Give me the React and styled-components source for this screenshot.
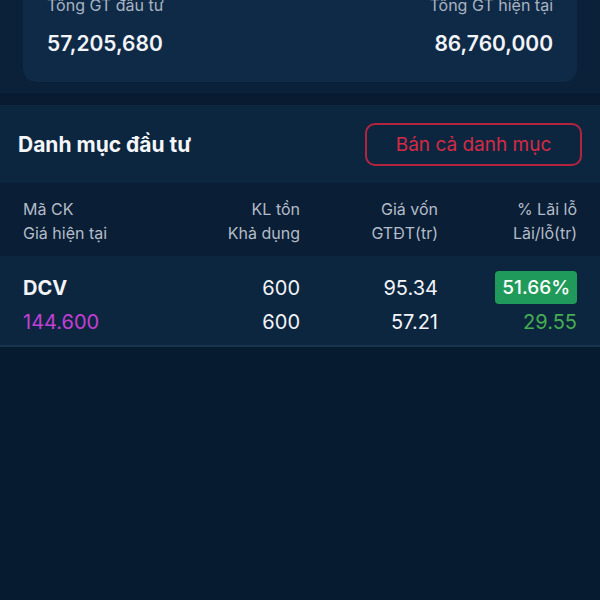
import React from "react";
import styled, { createGlobalStyle } from "styled-components";

const Global = createGlobalStyle`
  html, body { margin: 0; padding: 0; background: #061a30; }
  body { font-family: Inter, "Noto Sans", sans-serif; overflow: hidden; }
  #root { min-height: 600px; background: #061a30; }
`;

const Page = styled.div`
  width: 600px;
  height: 600px;
  overflow: hidden;
  background: #061a30;
  display: flex;
  flex-direction: column;
`;

const SummaryWrap = styled.div`
  background: #0b2139;
  padding: 0 23px 11px;
`;

const SummaryCard = styled.div`
  margin-top: -14px;
  background: #0f2a47;
  border-radius: 0 0 14px 14px;
  padding: 9px 24px 26px;
  display: flex;
  justify-content: space-between;
`;

const Stat = styled.div`
  display: flex;
  flex-direction: column;
  align-items: ${(p) => (p.$right ? "flex-end" : "flex-start")};
  gap: 17px;
`;

const StatLabel = styled.div`
  font-size: 16px;
  line-height: 20px;
  color: #a9b3c0;
`;

const StatValue = styled.div`
  font-size: 21px;
  line-height: 24px;
  font-weight: 600;
  color: #f2f4f7;
`;

const Divider = styled.div`
  height: 12px;
  background: #081b30;
`;

const SectionHeader = styled.div`
  height: 78px;
  background: #0d2640;
  display: flex;
  align-items: center;
  justify-content: space-between;
  padding: 0 18px;
`;

const Title = styled.h2`
  margin: 0;
  font-size: 21px;
  font-weight: 700;
  color: #f4f6f8;
`;

const SellButton = styled.button`
  width: 217px;
  height: 43px;
  margin-top: 1px;
  border: 2px solid #b3253f;
  border-radius: 10px;
  background: transparent;
  color: #d62a45;
  font-family: inherit;
  font-size: 19px;
  display: flex;
  align-items: center;
  justify-content: center;
`;

const Grid = styled.div`
  display: grid;
  grid-template-columns: 157px 120px 138px 139px;
  padding: 0 23px;
  background: ${(p) => p.$bg};
  border-bottom: ${(p) => (p.$border ? "2px solid #1b3450" : "none")};
`;

const HeadRow = styled(Grid)`
  padding-top: 14px;
  padding-bottom: 11px;
`;

const DataRow = styled(Grid)`
  padding-top: 15px;
  padding-bottom: 11px;
`;

const Cell = styled.div`
  display: flex;
  flex-direction: column;
  align-items: ${(p) => (p.$left ? "flex-start" : "flex-end")};
`;

const HeadText = styled.div`
  font-size: 16px;
  line-height: 24px;
  color: #b3bcc8;
  white-space: nowrap;
`;

const Line1 = styled.div`
  height: 33px;
  display: flex;
  align-items: center;
  font-size: 20px;
  font-weight: ${(p) => (p.$bold ? 700 : 400)};
  color: #f2f4f7;
`;

const Line2 = styled.div`
  margin-top: 6px;
  height: 24px;
  line-height: 24px;
  font-size: 20px;
  color: ${(p) => p.$color || "#f2f4f7"};
`;

const Badge = styled.span`
  background: #1f9a5b;
  color: #ffffff;
  border-radius: 4px;
  padding: 0 7px;
  height: 33px;
  display: flex;
  align-items: center;
  font-size: 19px;
  font-weight: 500;
`;

export default function App() {
  return (
    <Page>
      <Global />
      <SummaryWrap>
        <SummaryCard>
          <Stat>
            <StatLabel>Tổng GT đầu tư</StatLabel>
            <StatValue>57,205,680</StatValue>
          </Stat>
          <Stat $right>
            <StatLabel>Tổng GT hiện tại</StatLabel>
            <StatValue>86,760,000</StatValue>
          </Stat>
        </SummaryCard>
      </SummaryWrap>
      <Divider />
      <SectionHeader>
        <Title>Danh mục đầu tư</Title>
        <SellButton>Bán cả danh mục</SellButton>
      </SectionHeader>
      <HeadRow $bg="#0a1e35">
        <Cell $left>
          <HeadText>Mã CK</HeadText>
          <HeadText>Giá hiện tại</HeadText>
        </Cell>
        <Cell>
          <HeadText>KL tồn</HeadText>
          <HeadText>Khả dụng</HeadText>
        </Cell>
        <Cell>
          <HeadText>Giá vốn</HeadText>
          <HeadText>GTĐT(tr)</HeadText>
        </Cell>
        <Cell>
          <HeadText>% Lãi lỗ</HeadText>
          <HeadText>Lãi/lỗ(tr)</HeadText>
        </Cell>
      </HeadRow>
      <DataRow $bg="#0d2640" $border>
        <Cell $left>
          <Line1 $bold>DCV</Line1>
          <Line2 $color="#c33fd6">144.600</Line2>
        </Cell>
        <Cell>
          <Line1>600</Line1>
          <Line2>600</Line2>
        </Cell>
        <Cell>
          <Line1>95.34</Line1>
          <Line2>57.21</Line2>
        </Cell>
        <Cell>
          <Line1>
            <Badge>51.66%</Badge>
          </Line1>
          <Line2 $color="#45ad52">29.55</Line2>
        </Cell>
      </DataRow>
    </Page>
  );
}
